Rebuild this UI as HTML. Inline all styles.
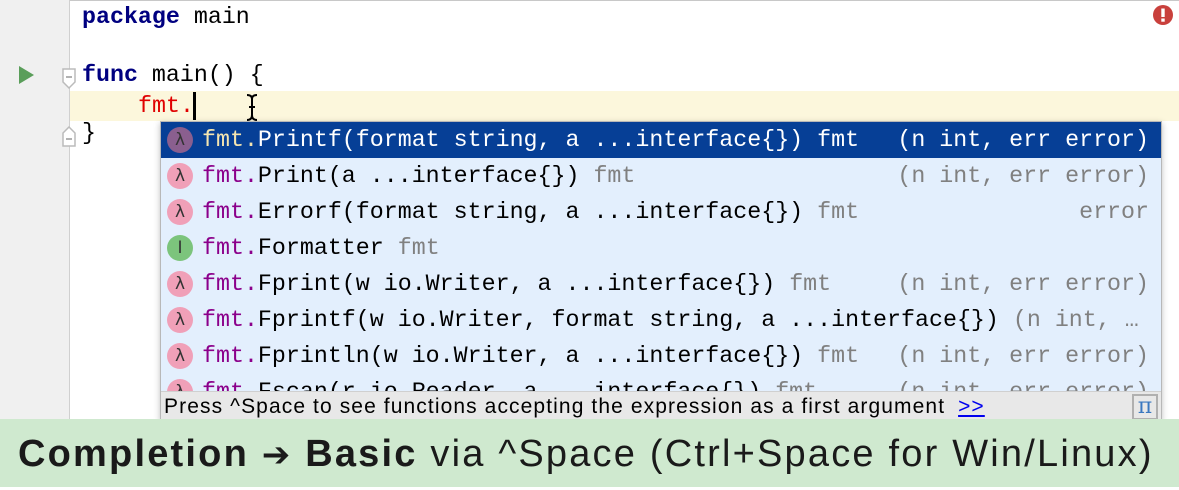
<!DOCTYPE html>
<html><head><style>
*{margin:0;padding:0;box-sizing:border-box}
body{width:1179px;height:487px;overflow:hidden;background:#fff;position:relative;font-family:"Liberation Mono",monospace}
.gut{position:absolute;left:0;top:0;width:70px;height:487px;background:#f0f0f0;border-right:1px solid #d0d0d0}
.top{position:absolute;left:0;top:0;width:1179px;height:1px;background:#c8c8c8}
.cur{position:absolute;left:0;top:91px;width:1179px;height:30px;background:#fcf7dc}
.code{position:absolute;font-size:23.3px;white-space:pre;line-height:30px}
.kw{color:#000080;font-weight:bold}
.pop{position:absolute;left:160px;top:121px;width:1002px;height:299px;background:#e3effd;border:1px solid #b8b8b8;box-shadow:0 2px 6px rgba(0,0,0,.25);overflow:hidden}
.row{position:absolute;left:0;width:1000px;height:36px;font-size:23.3px;line-height:36px;white-space:pre;color:#000}
.row .ic{position:absolute;left:6px;top:5px;width:26px;height:26px;border-radius:50%;background:#f0a0b8;color:#333;font-family:"DejaVu Sans",sans-serif;font-size:17px;line-height:26px;text-align:center}
.row .t{position:absolute;left:41px}
.row .r{position:absolute;right:12px;color:#808080}
.p{color:#8b008b}.g{color:#808080}
.sel{background:#063f96;color:#fff}
.sel .p{color:#f5e5b0}.sel .g,.sel .r{color:#fff}
.sel .ic{background:#8a5f8f}
.foot{position:absolute;left:0;top:269px;width:1000px;height:30px;background:#e8e8e8;border-top:1px solid #d0d0d0;font-family:"Liberation Sans",sans-serif;font-size:21px;letter-spacing:1.1px;line-height:29px;padding-left:3px;color:#000;white-space:pre}
.foot a{color:#0000ee;text-decoration:underline;margin-left:6px}
.pi{position:absolute;right:3px;top:2px;width:26px;height:26px;border:2px solid #b0b0b0;color:#3a78c0;font-family:"DejaVu Serif",serif;font-size:22px;line-height:22px;text-align:center;background:#e8e8e8;letter-spacing:0}
.ban{position:absolute;left:0;top:419px;width:1179px;height:68px;background:#cfe9cf;font-family:"Liberation Sans",sans-serif;font-size:38px;letter-spacing:2.2px;line-height:70px;padding-left:18px;color:#1a1a1a;white-space:pre}
.ar{font-family:"DejaVu Sans",sans-serif;font-weight:bold;font-size:34px}
</style></head><body>
<div class="top"></div>
<div class="cur"></div>
<div class="gut"></div>
<svg style="position:absolute;left:18px;top:65px" width="18" height="20"><path d="M1 1 L16 10 L1 19Z" fill="#5a9e5a"/></svg>
<svg style="position:absolute;left:61px;top:68px" width="18" height="22"><path d="M2 1H14V14L8 20L2 14Z" fill="#fff" stroke="#bbb" stroke-width="1.5"/><path d="M5 9H11" stroke="#999" stroke-width="1.5"/></svg>
<svg style="position:absolute;left:61px;top:125px" width="18" height="22"><path d="M2 21H14V8L8 2L2 8Z" fill="#fff" stroke="#bbb" stroke-width="1.5"/><path d="M5 14H11" stroke="#999" stroke-width="1.5"/></svg>
<svg style="position:absolute;left:1153px;top:5px" width="20" height="20"><circle cx="10" cy="10" r="10" fill="#c9403c"/><rect x="8.3" y="3.5" width="3.4" height="8.5" fill="#fff"/><rect x="8.3" y="13.5" width="3.4" height="3.2" fill="#fff"/></svg>
<div class="code" style="left:82px;top:2px"><span class="kw">package</span> main</div>
<div class="code" style="left:82px;top:60px"><span class="kw">func</span> main() {</div>
<div class="code" style="left:138px;top:91px;color:#e00000">fmt.</div>
<div style="position:absolute;left:193px;top:92px;width:3px;height:28px;background:#000"></div>
<svg style="position:absolute;left:244px;top:93px" width="16" height="30"><path d="M3 2Q8 2 8 6V22Q8 27 3 27M13 2Q8 2 8 6V22Q8 27 13 27M5 14H11" fill="none" stroke="#000" stroke-width="2"/></svg>
<div class="code" style="left:82px;top:118px">}</div>
<div style="position:absolute;left:88px;top:458px;font-family:'Liberation Sans',sans-serif;font-size:22px;color:#bcc;opacity:.5">main()</div>
<div class="pop">
<div class="row sel" style="top:0"><span class="ic">λ</span><span class="t"><span class="p">fmt.</span>Printf(format string, a ...interface{}) <span class="g">fmt</span></span><span class="r">(n int, err error)</span></div>
<div class="row" style="top:36px"><span class="ic">λ</span><span class="t"><span class="p">fmt.</span>Print(a ...interface{}) <span class="g">fmt</span></span><span class="r">(n int, err error)</span></div>
<div class="row" style="top:72px"><span class="ic">λ</span><span class="t"><span class="p">fmt.</span>Errorf(format string, a ...interface{}) <span class="g">fmt</span></span><span class="r">error</span></div>
<div class="row" style="top:108px"><span class="ic" style="background:#7cc47c">I</span><span class="t"><span class="p">fmt.</span>Formatter <span class="g">fmt</span></span></div>
<div class="row" style="top:144px"><span class="ic">λ</span><span class="t"><span class="p">fmt.</span>Fprint(w io.Writer, a ...interface{}) <span class="g">fmt</span></span><span class="r">(n int, err error)</span></div>
<div class="row" style="top:180px"><span class="ic">λ</span><span class="t"><span class="p">fmt.</span>Fprintf(w io.Writer, format string, a ...interface{}) <span class="g">(n int, …</span></span></div>
<div class="row" style="top:216px"><span class="ic">λ</span><span class="t"><span class="p">fmt.</span>Fprintln(w io.Writer, a ...interface{}) <span class="g">fmt</span></span><span class="r">(n int, err error)</span></div>
<div class="row" style="top:252px"><span class="ic">λ</span><span class="t"><span class="p">fmt.</span>Fscan(r io.Reader, a ...interface{}) <span class="g">fmt</span></span><span class="r">(n int, err error)</span></div>
<div class="foot">Press ^Space to see functions accepting the expression as a first argument <a>&gt;&gt;</a><div class="pi">π</div></div>
</div>
<div class="ban"><b>Completion <span class="ar">➔</span> Basic</b> via ^Space (Ctrl+Space for Win/Linux)</div>
</body></html>
